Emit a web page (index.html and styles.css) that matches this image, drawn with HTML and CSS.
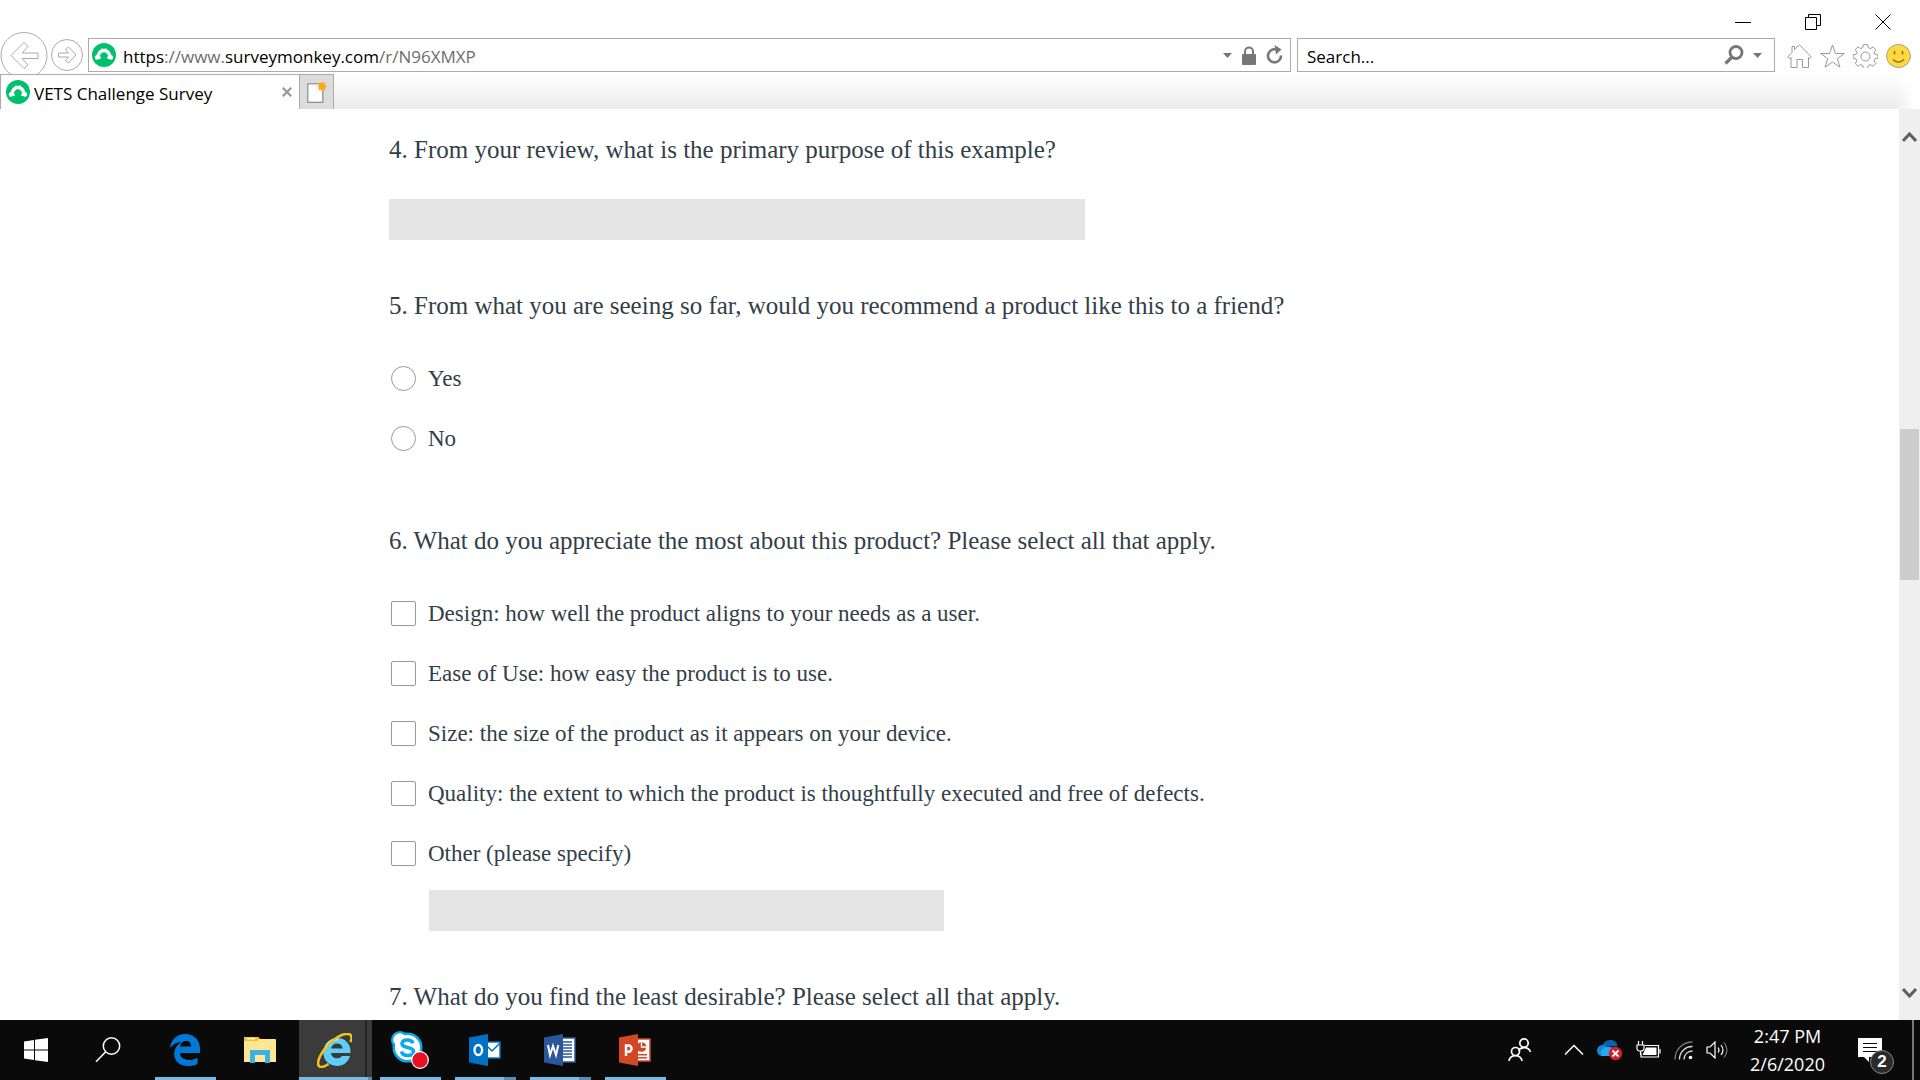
FILE: index.html
```html
<!DOCTYPE html>
<html lang="en">
<head>
  <meta charset="UTF-8">
  <title>VETS Challenge Survey</title>
  <link rel="stylesheet" href="styles.css">
</head>
<body>
  <!-- shared monkey logo -->
  <svg class="defs" width="0" height="0" aria-hidden="true">
    <symbol id="monkey" viewBox="0 0 24 24">
      <circle cx="12" cy="12" r="12" fill="#00bf6f"/>
      <path d="M5.500 14.500C6.500 10.500 8.500 7.500 12 7.500s5.500 3 6.500 7" fill="none" stroke="#fff" stroke-width="3.400"/>
      <path d="M9.500 4.800l2.500 2 2.500-2L14 8h-4z" fill="#fff"/>
      <circle cx="5" cy="14.500" r="2.200" fill="#fff"/>
      <circle cx="19" cy="14.500" r="2.200" fill="#fff"/>
      <path d="M7.800 13.500v2.500M16.200 13.500v2.500" stroke="#fff" stroke-width="1.800"/>
    </symbol>
  </svg>

  <header class="browser">
    <div class="window-controls">
      <button aria-label="Minimize"><svg width="16" height="16"><path d="M0 8.500h16" stroke="#000"/></svg></button>
      <button aria-label="Restore"><svg width="16" height="16" fill="none" stroke="#000"><path d="M.5 3.500h11v12H.5zM3.500 3V.5h12v11H12"/></svg></button>
      <button aria-label="Close"><svg width="16" height="16"><path d="M.5 .5l15 15M15.500 .5l-15 15" stroke="#000"/></svg></button>
    </div>

    <div class="toolbar">
      <button class="nav-back" aria-label="Back">
        <svg width="48" height="42" viewBox="0 0 48 42" fill="none" stroke="#aaa">
          <circle cx="24" cy="23.500" r="23"/>
          <path d="M11 23.500L24 10.500l4 4-6 6.500h16v5.500H22l6 6.500-4 3.500z"/>
        </svg>
      </button>
      <button class="nav-forward" aria-label="Forward">
        <svg width="32" height="32" viewBox="0 0 32 32" fill="none" stroke="#aaa">
          <circle cx="16" cy="16" r="15.500"/>
          <path d="M25 16l-7.500-8-3 2.500 3 3.500H7.500v4h10l-3 3.500 3 2.500z"/>
        </svg>
      </button>
      <div class="address">
        <svg width="24" height="24"><use href="#monkey"/></svg>
        <div class="url" role="textbox" aria-label="Address" contenteditable="true" spellcheck="false"><b>https</b>://www.<b>surveymonkey.com</b>/r/N96XMXP</div>
        <button aria-label="Show address list"><svg width="9" height="5"><path d="M0 0h9L4.500 5z" fill="#777"/></svg></button>
        <svg width="14" height="19" viewBox="0 0 14 19"><path d="M3 9V5.500a4 4 0 0 1 8 0V9" fill="none" stroke="#777" stroke-width="2"/><rect y="8" width="14" height="11" rx="1" fill="#777"/></svg>
        <button aria-label="Refresh"><svg width="17" height="20" viewBox="0 0 17 20"><path d="M10 4.500A6.500 6.500 0 1 0 15 10.500" fill="none" stroke="#777" stroke-width="2.600"/><path d="M8.500 0l7 4.500-5.500 5z" fill="#777"/></svg></button>
      </div>
      <div class="search">
        <input type="text" aria-label="Search" placeholder="Search...">
        <button aria-label="Go"><svg width="20" height="20" viewBox="0 0 20 20" fill="none" stroke="#777"><circle cx="12" cy="7.500" r="6" stroke-width="2.800"/><path d="M8 12l-6.500 6.500" stroke-width="3.200"/></svg></button>
        <button aria-label="Search options"><svg width="9" height="5"><path d="M0 0h9L4.500 5z" fill="#777"/></svg></button>
      </div>
      <div class="tools">
        <button aria-label="Home"><svg width="25" height="24" viewBox="0 0 25 24" fill="none" stroke="#999"><path d="M.7 13L5 8.500V2.500h2.500v3L12.500.7 24.300 13l-1.500 1.500-1.300-1V23.500h-6v-8h-5.500v8h-6V13.500l-1.800 1z"/></svg></button>
        <button aria-label="Favorites"><svg width="25" height="24" viewBox="0 0 25 24" fill="none" stroke="#999"><path d="M12.500 1l3 8.500h8.800l-7 5.200 2.700 8.500-7.500-5.200L5 23.200l2.700-8.500-7-5.200h8.800z"/></svg></button>
        <button aria-label="Settings"><svg width="25" height="24" viewBox="0 0 25 24" fill="none" stroke="#999"><path d="M10.300.7h4.400l.6 3 2 .9 2.700-1.800 2.800 2.900-1.700 2.600.8 2 3 .6v3.300l-3 .7-.8 2 1.700 2.600-2.800 2.800-2.700-1.700-2 .8-.6 3h-4.400l-.6-3-2-.8L5 22.300l-2.800-2.800 1.700-2.600-.8-2-3-.7v-3.300l3-.6.8-2-1.700-2.600L5 2.800l2.700 1.800 2-.9z"/><circle cx="12.500" cy="12.500" r="4.500"/></svg></button>
        <button aria-label="Feedback"><svg width="25" height="24" viewBox="0 0 25 24"><ellipse cx="12.500" cy="12" rx="12" ry="11.500" fill="#ffd83b" stroke="#a0a0a0"/><path d="M8.500 7v3.500M16.500 7v3.500" stroke="#8a7530" stroke-width="1.600"/><path d="M7 15.500q5.500 5.500 11 0" fill="none" stroke="#8a7530" stroke-width="1.600"/></svg></button>
      </div>
    </div>

    <div class="tabs">
      <div class="tab">
        <svg width="24" height="24"><use href="#monkey"/></svg>
        <span>VETS Challenge Survey</span>
        <button aria-label="Close tab"><svg width="10" height="10"><path d="M.7 .7l8.600 8.600M9.300 .7L.7 9.300" stroke="#999" stroke-width="2.200"/></svg></button>
      </div>
      <button class="new-tab" aria-label="New tab">
        <svg width="20" height="22" viewBox="0 0 20 22"><rect x=".8" y="2.800" width="15" height="18.500" fill="#fff" stroke="#8a8a8a" stroke-width="1.200"/><path d="M15 0l1.200 2.600L19 1.500l-1.100 2.700L20 5.500l-2.200 1.200L19 9.400l-2.800-1L15 11l-1.200-2.600-2.800 1 1.200-2.700L10 5.500l2.200-1.300L11 1.500l2.800 1.100z" fill="#fba919"/></svg>
      </button>
      <div class="tab-strip"></div>
    </div>
  </header>

  <div class="viewport">
    <main class="survey">
      <section class="question">
        <h2 id="q4">4. From your review, what is the primary purpose of this example?</h2>
        <input class="answer" type="text" aria-labelledby="q4">
      </section>

      <section class="question question-choices">
        <h2>5. From what you are seeing so far, would you recommend a product like this to a friend?</h2>
        <div class="options">
          <label><input type="radio" name="q5"> Yes</label>
          <label><input type="radio" name="q5"> No</label>
        </div>
      </section>

      <section class="question">
        <h2>6. What do you appreciate the most about this product? Please select all that apply.</h2>
        <div class="options">
          <label><input type="checkbox" name="q6"> Design: how well the product aligns to your needs as a user.</label>
          <label><input type="checkbox" name="q6"> Ease of Use: how easy the product is to use.</label>
          <label><input type="checkbox" name="q6"> Size: the size of the product as it appears on your device.</label>
          <label><input type="checkbox" name="q6"> Quality: the extent to which the product is thoughtfully executed and free of defects.</label>
          <label id="q6-other"><input type="checkbox" name="q6"> Other (please specify)</label>
        </div>
        <input class="answer answer-other" type="text" aria-labelledby="q6-other">
      </section>

      <section class="question">
        <h2>7. What do you find the least desirable? Please select all that apply.</h2>
      </section>
    </main>

    <div class="scrollbar">
      <button aria-label="Scroll up"><svg width="15" height="12"><path d="M1 10l6.500-7L14 10" fill="none" stroke="#606060" stroke-width="3"/></svg></button>
      <div class="track"><div class="thumb"></div></div>
      <button aria-label="Scroll down"><svg width="15" height="12"><path d="M1 2l6.500 7L14 2" fill="none" stroke="#606060" stroke-width="3"/></svg></button>
    </div>
  </div>

  <footer class="taskbar">
    <button class="start" aria-label="Start"><svg width="24" height="24" fill="#fff"><path d="M0 3.400L10 2v9.500H0zM11 1.800L24 0v11.500H11zM0 12.500h10V22L0 20.600zM11 12.500h13V24l-13-1.800z"/></svg></button>
    <button class="start" aria-label="Search"><svg width="26" height="26" fill="none" stroke="#fff" stroke-width="1.500"><circle cx="16.500" cy="9" r="8.200"/><path d="M10.500 15L1 24.700"/></svg></button>
    <div class="apps">
      <button class="app open" aria-label="Edge">
        <svg width="30" height="32" viewBox="0 0 30 32"><path d="M0 14C1 6 6.500 0 15.500 0 25 0 30 7 30 15v4H10c.3 5 4.500 7 9 7 3.300 0 6-.9 8.500-2.300V30c-2.800 1.400-6.200 2-9.800 2C9 32 4.200 26.600 4.200 20c0-5.200 3-9.600 7.500-12C6.500 8.300 2.500 10.500 0 14zm10.200-1.500h11C21.200 9 19.500 7 16 7s-5.500 2.500-5.800 5.500z" fill="#0078d7"/></svg>
      </button>
      <button class="app" aria-label="File Explorer">
        <svg width="32" height="28" viewBox="0 0 32 28"><path d="M0 1.500Q0 1 1 1h13l2 2h15q1 0 1 1v22H0z" fill="#ffe693"/><path d="M0 1.500Q0 1 1 1h13l1.500 1.800L14 5H0z" fill="#f8c421"/><path d="M3 2.800h8" stroke="#fff" stroke-width="1.200"/><path d="M6 27V14h20v13h-5v-8H11v8z" fill="#3bb2e6"/></svg>
      </button>
      <button class="app open active split" aria-label="Internet Explorer">
        <svg width="35" height="35" viewBox="0 0 35 35">
          <path d="M33.500 20H14c.4 3.300 2.800 5.300 6 5.300 2.300 0 4-.8 5-2.400h8c-1.800 6-6.500 10-13 10C12 33 6.300 27.300 6.300 19.300S12.300 5 20 5c8.500 0 14 6 13.500 15zM14 15.500h11.800c-.3-3-2.500-5-5.700-5-3.200 0-5.500 2-6.100 5z" fill="#5fcdf5"/>
          <path d="M9 14c2-5 7-8 12-7.500" stroke="#b9eefb" stroke-width="2" fill="none"/>
          <path d="M33.500 9C35.500 4 34.500 1.500 31.500 1 25 0 15 6.500 8 15.500 1.500 24-.5 31.500 2.500 33.500c2 1.300 5.500 0 9-2.500" fill="none" stroke="#f4c01b" stroke-width="2.600"/>
        </svg>
      </button>
      <button class="app open" aria-label="Skype">
        <svg width="40" height="40" viewBox="0 0 40 40">
          <g fill="#fff" stroke="#0aaaea" stroke-width="2.500"><circle cx="10" cy="10" r="7.800"/><circle cx="25" cy="25" r="7"/><circle cx="17.500" cy="17.500" r="13.800"/></g>
          <circle cx="10" cy="10" r="6.500" fill="#fff"/>
          <path d="M23 13.300c-.8-2.600-3-3.300-5.500-3.300-3 0-5.500 1.200-5.500 3.800 0 5.200 11.500 2.200 11.500 7.700 0 2.700-2.500 4-5.800 4-3 0-5.500-1-6.200-4" fill="none" stroke="#0aaaea" stroke-width="3.600"/>
          <circle cx="30" cy="30" r="8.300" fill="#e81123" stroke="#fff" stroke-width="1.200"/>
        </svg>
      </button>
      <button class="app open split" aria-label="Outlook">
        <svg width="32" height="32" viewBox="0 0 32 32"><rect x="17" y="8" width="14" height="16" fill="#fff" stroke="#0072c6" stroke-width="1.500"/><path d="M18 12l5 5 8-8" fill="none" stroke="#0072c6" stroke-width="1.500"/><path d="M0 3.500L19 0v32L0 28.500z" fill="#0072c6"/><ellipse cx="9.300" cy="16" rx="3.800" ry="5" fill="none" stroke="#fff" stroke-width="2.400"/></svg>
      </button>
      <button class="app open split" aria-label="Word">
        <svg width="32" height="32" viewBox="0 0 32 32"><rect x="17" y="4" width="14" height="24" fill="#fff" stroke="#2b579a" stroke-width="1.500"/><path d="M19 8h9M19 11h9M19 14h9M19 17h9M19 20h9M19 23h9" stroke="#2b579a" stroke-width="1.400"/><path d="M0 3.500L19 0v32L0 28.500z" fill="#2b579a"/><path d="M4 11l2 10L9 12l3 9 2.300-10" fill="none" stroke="#fff" stroke-width="2"/></svg>
      </button>
      <button class="app open" aria-label="PowerPoint">
        <svg width="32" height="32" viewBox="0 0 32 32"><rect x="17" y="5" width="14" height="22" fill="#fff" stroke="#d24726" stroke-width="1.500"/><circle cx="22.500" cy="13" r="4.800" fill="#d24726"/><path d="M22.500 8v5h5" fill="none" stroke="#fff" stroke-width="1.300"/><path d="M19 20h9v1.500h-9zM19 23h9v1.500h-9z" fill="#d24726"/><path d="M0 3.500L19 0v32L0 28.500z" fill="#d24726"/><path d="M7 22V11.500h2.500a3 3 0 0 1 0 6.200H7" fill="none" stroke="#fff" stroke-width="2.400"/></svg>
      </button>
    </div>

    <div class="tray">
      <button class="people" aria-label="People"><svg width="24" height="24" viewBox="0 0 24 24" fill="none" stroke="#fff" stroke-width="1.700"><circle cx="16" cy="5" r="4.200"/><path d="M10.500 12.500C12 9.500 20 7.500 22.500 14"/><circle cx="7.500" cy="13.500" r="4"/><path d="M1 23c1-7 12-7 13 0"/></svg></button>
      <button aria-label="Show hidden icons"><svg width="20" height="12"><path d="M1 10.500L10 1.500l9 9" fill="none" stroke="#fff" stroke-width="1.500"/></svg></button>
      <button aria-label="OneDrive"><svg width="26" height="22" viewBox="0 0 26 22"><path d="M5 8C6 3 10 1 13.500 1c4 0 6.500 2.500 7 6z" fill="#0864b1"/><circle cx="5.500" cy="11.500" r="5.500" fill="#1389d8"/><path d="M5 17c-3-3 0-9 5-9 8 0 10 2 11 9z" fill="#28a8ea"/><circle cx="18.500" cy="14.500" r="6.700" fill="#d5202c"/><path d="M15.500 11.500l6 6M21.500 11.500l-6 6" stroke="#fff" stroke-width="1.800"/></svg></button>
      <button aria-label="Battery"><svg width="25" height="18" viewBox="0 0 25 18" fill="none" stroke="#fff" stroke-width="1.200"><path d="M9 4.500h13.500v11.500H5V12"/><path d="M10 6.500h10.500v7.500H6.500z" fill="#fff" stroke="none"/><path d="M24 8v4.500M1 4h7v3.500q0 2.500-3.500 2.500T1 7.500zM2.500 4V0M6.500 4V0M4.500 10v4"/></svg></button>
      <button aria-label="Network"><svg width="19" height="19" viewBox="0 0 19 19" fill="none" stroke-width="1.300"><path d="M1 18.500C1 8.500 8.500 1 18.500 1" stroke="#777"/><path d="M5.500 18.500c0-7.500 5.500-13 13-13M10 18.500c0-5 3.500-8.500 8.500-8.500" stroke="#ddd"/><circle cx="16.500" cy="16.500" r="1.800" fill="#fff"/></svg></button>
      <button aria-label="Volume"><svg width="23" height="18" viewBox="0 0 23 18" fill="none" stroke="#fff" stroke-width="1.200"><path d="M1 6h3l5-5v16l-5-5H1z"/><path d="M12 6.500q2 2.500 0 5M15 4q4 5 0 10"/><path d="M18 1.500q6 7.500 0 15" stroke="#777"/></svg></button>
      <time class="clock" datetime="2020-02-06T14:47">2:47 PM<br>2/6/2020</time>
      <button class="notifications" aria-label="Notifications">
        <svg width="24" height="24"><path d="M0 0h24v19H11v5l-5-5H0z" fill="#fff"/><path d="M5 5.500h14M5 9.500h14M5 13.500h14" stroke="#0a0a0a" stroke-width="1.200"/></svg>
        <span class="badge">2</span>
      </button>
    </div>
  </footer>
</body>
</html>
```

FILE: styles.css
```css
* {
  box-sizing: border-box;
}
body {
  margin: 0;
  height: 100vh;
  display: flex;
  flex-direction: column;
  overflow: hidden;
  background: #fff;
  font-family: "Open Sans", "Noto Sans", sans-serif;
  font-size: 17px;
  color: #000;
}
button {
  display: flex;
  align-items: center;
  justify-content: center;
  padding: 0;
  border: 0;
  background: none;
}
svg {
  display: block;
  flex-shrink: 0;
}
.defs {
  position: absolute;
}

/* browser window */
.window-controls {
  display: flex;
  justify-content: flex-end;
  gap: 54px;
  height: 32px;
  padding: 12px 29px 0 0;
}
.toolbar {
  display: flex;
  align-items: center;
  height: 42px;
}
.nav-forward {
  margin: 4px 5px 0 3px;
}
.address,
.search {
  display: flex;
  align-items: center;
  height: 34px;
  margin-top: 4px;
  border: 1px solid #ababab;
}
.address {
  flex: 1;
  gap: 10px;
  padding: 0 7px 0 3px;
}
.url {
  flex: 1;
  margin-left: -3px;
  padding-top: 2px;
  color: #6d6d6d;
  white-space: nowrap;
}
.url b {
  font-weight: normal;
  color: #000;
}
.search {
  width: 478px;
  margin-left: 6px;
  padding: 0 12px 0 9px;
  gap: 9px;
}
.search input {
  flex: 1;
  min-width: 0;
  padding: 2px 0 0;
  border: 0;
  font: inherit;
}
.search input::placeholder {
  color: #000;
  opacity: 1;
}
.tools {
  display: flex;
  gap: 8px;
  padding: 6px 9px 0 12px;
}

/* tabs */
.tabs {
  display: flex;
  height: 35px;
}
.tab {
  display: flex;
  align-items: center;
  gap: 4px;
  width: 300px;
  padding: 0 7px 0 5px;
  border: 1px solid #ababab;
  border-bottom: 0;
}
.tab span {
  flex: 1;
  padding-top: 2px;
}
.new-tab {
  width: 34px;
  border: 1px solid #ababab;
  border-width: 1px 1px 0 0;
  background: #dcdcdc;
}
.tab-strip {
  flex: 1;
  margin-right: 5px;
  background: linear-gradient(to right, rgba(255, 255, 255, 0) calc(100% - 20px), #fff), linear-gradient(#fff, #ebebeb);
}

/* survey */
.viewport {
  flex: 1;
  min-height: 0;
  display: flex;
}
.survey {
  flex: 1;
  max-width: 1121px;
  margin: 0 auto;
  padding-top: 25px;
  font-family: "Liberation Serif", serif;
  color: #333e48;
}
.question {
  margin-bottom: 50px;
}
.question-choices {
  margin-bottom: 74px;
}
.question h2 {
  margin: 0;
  font-size: 25px;
  font-weight: normal;
  line-height: 32px;
}
.answer {
  display: block;
  width: 100%;
  max-width: 696px;
  height: 41px;
  margin-top: 33px;
  padding: 0 10px;
  border: 0;
  background: #e4e4e4;
  font: inherit;
}
.answer-other {
  max-width: 515px;
  margin: 24px 0 0 40px;
}
.options {
  display: flex;
  flex-direction: column;
  gap: 35px;
  margin-top: 44px;
}
.options label {
  display: flex;
  align-items: center;
  gap: 12px;
  height: 25px;
  padding-left: 2px;
  font-size: 23px;
  line-height: 25px;
}
.options input {
  appearance: none;
  width: 25px;
  height: 25px;
  margin: 0;
  border: 1px solid #999;
  border-radius: 2px;
  background: #fff;
}
.options input[type="radio"] {
  border-radius: 50%;
}
.options input:checked {
  background: #00bf6f;
}

/* scrollbar */
.scrollbar {
  display: flex;
  flex-direction: column;
  width: 21px;
  padding: 20px 1px 19px;
  background: #efefef;
}
.scrollbar button {
  height: 16px;
}
.track {
  flex: 1;
}
.thumb {
  height: 18%;
  margin-top: 284px;
  background: #cdcdcd;
}

/* taskbar */
.taskbar {
  display: flex;
  height: 60px;
  background: #0a0a0a;
  color: #fff;
}
.start {
  width: 72px;
}
.apps {
  display: flex;
  gap: 14px;
  margin-left: 11px;
}
.app {
  width: 61px;
  padding: 3px 2px 0 0;
  border-bottom: 3px solid transparent;
}
.open {
  border-color: #76b9ed;
}
.split {
  border-image: linear-gradient(to right, #76b9ed calc(100% - 14px), #5a8db5 calc(100% - 14px)) 3;
}
.active {
  width: 73px;
  margin: 0 -6px;
  background: linear-gradient(to right, #3b3b3b 66px, #232323 66px, #232323 68px, #3b3b3b 68px);
  border-image: linear-gradient(to right, #76b9ed calc(100% - 7px), #5a8db5 calc(100% - 7px)) 3;
}
.tray {
  display: flex;
  gap: 13px;
  margin-left: auto;
  padding-right: 6px;
  border-right: 2px solid #777;
  margin-right: 6px;
}
.people {
  margin-right: 19px;
}
.clock {
  margin-left: 8px;
  padding-top: 2px;
  font-size: 18px;
  line-height: 28px;
  text-align: center;
}
.notifications {
  position: relative;
  width: 68px;
  padding-right: 4px;
}
.badge {
  position: absolute;
  right: 12px;
  bottom: 6px;
  width: 24px;
  height: 24px;
  border: 1px solid #888;
  border-radius: 50%;
  background: #2b2b2b;
  color: #fff;
  font-size: 17px;
  font-weight: 600;
  line-height: 22px;
}
```
